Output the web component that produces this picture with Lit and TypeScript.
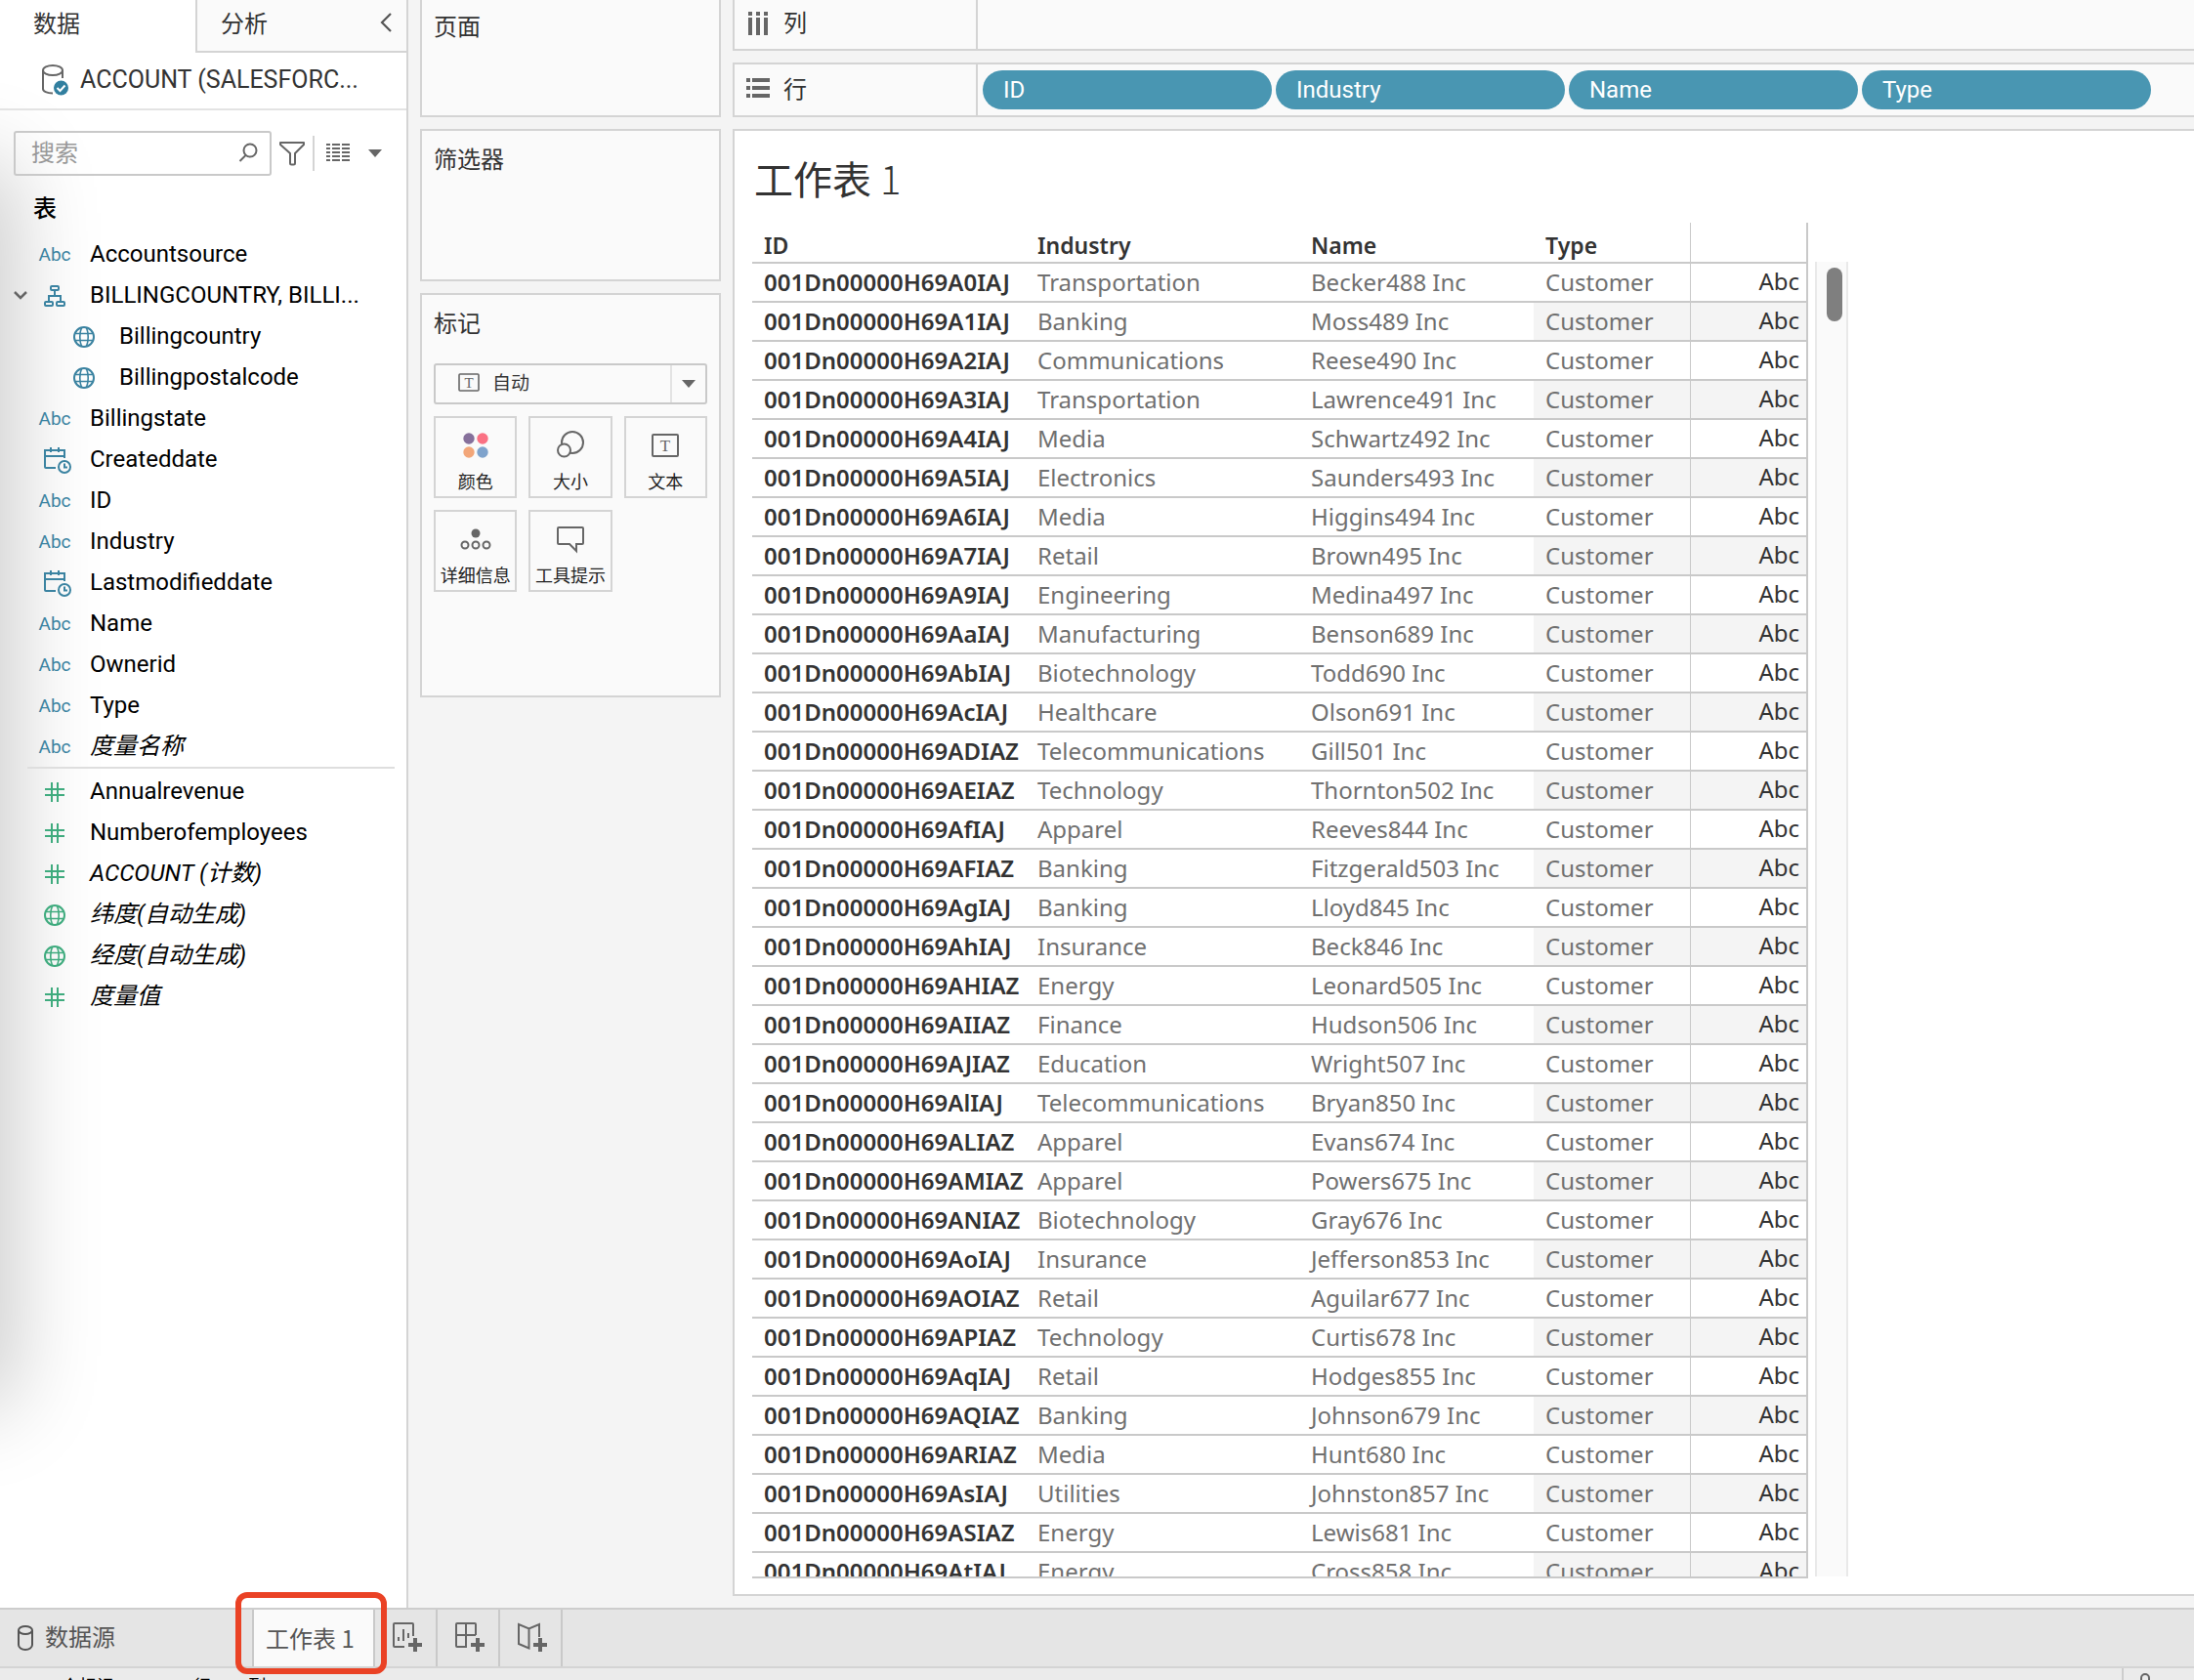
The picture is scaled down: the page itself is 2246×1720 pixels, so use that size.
import { LitElement, html, svg, css, nothing, TemplateResult } from "lit";
import { customElement } from "lit/decorators.js";
import { classMap } from "lit/directives/class-map.js";

type IconName = "abc" | "date" | "globe" | "hash" | "tree";

interface Field {
  label: string;
  icon: IconName;
  child?: boolean;
  generated?: boolean;
  expandable?: boolean;
}

const DIMENSIONS: Field[] = [
  { label: "Accountsource", icon: "abc" },
  { label: "BILLINGCOUNTRY, BILLI...", icon: "tree", expandable: true },
  { label: "Billingcountry", icon: "globe", child: true },
  { label: "Billingpostalcode", icon: "globe", child: true },
  { label: "Billingstate", icon: "abc" },
  { label: "Createddate", icon: "date" },
  { label: "ID", icon: "abc" },
  { label: "Industry", icon: "abc" },
  { label: "Lastmodifieddate", icon: "date" },
  { label: "Name", icon: "abc" },
  { label: "Ownerid", icon: "abc" },
  { label: "Type", icon: "abc" },
  { label: "度量名称", icon: "abc", generated: true },
];

const MEASURES: Field[] = [
  { label: "Annualrevenue", icon: "hash" },
  { label: "Numberofemployees", icon: "hash" },
  { label: "ACCOUNT (计数)", icon: "hash", generated: true },
  { label: "纬度(自动生成)", icon: "globe", generated: true },
  { label: "经度(自动生成)", icon: "globe", generated: true },
  { label: "度量值", icon: "hash", generated: true },
];

const ROWS: [string, string, string][] = [
  ["A0IAJ", "Transportation", "Becker488 Inc"],
  ["A1IAJ", "Banking", "Moss489 Inc"],
  ["A2IAJ", "Communications", "Reese490 Inc"],
  ["A3IAJ", "Transportation", "Lawrence491 Inc"],
  ["A4IAJ", "Media", "Schwartz492 Inc"],
  ["A5IAJ", "Electronics", "Saunders493 Inc"],
  ["A6IAJ", "Media", "Higgins494 Inc"],
  ["A7IAJ", "Retail", "Brown495 Inc"],
  ["A9IAJ", "Engineering", "Medina497 Inc"],
  ["AaIAJ", "Manufacturing", "Benson689 Inc"],
  ["AbIAJ", "Biotechnology", "Todd690 Inc"],
  ["AcIAJ", "Healthcare", "Olson691 Inc"],
  ["ADIAZ", "Telecommunications", "Gill501 Inc"],
  ["AEIAZ", "Technology", "Thornton502 Inc"],
  ["AfIAJ", "Apparel", "Reeves844 Inc"],
  ["AFIAZ", "Banking", "Fitzgerald503 Inc"],
  ["AgIAJ", "Banking", "Lloyd845 Inc"],
  ["AhIAJ", "Insurance", "Beck846 Inc"],
  ["AHIAZ", "Energy", "Leonard505 Inc"],
  ["AIIAZ", "Finance", "Hudson506 Inc"],
  ["AJIAZ", "Education", "Wright507 Inc"],
  ["AlIAJ", "Telecommunications", "Bryan850 Inc"],
  ["ALIAZ", "Apparel", "Evans674 Inc"],
  ["AMIAZ", "Apparel", "Powers675 Inc"],
  ["ANIAZ", "Biotechnology", "Gray676 Inc"],
  ["AoIAJ", "Insurance", "Jefferson853 Inc"],
  ["AOIAZ", "Retail", "Aguilar677 Inc"],
  ["APIAZ", "Technology", "Curtis678 Inc"],
  ["AqIAJ", "Retail", "Hodges855 Inc"],
  ["AQIAZ", "Banking", "Johnson679 Inc"],
  ["ARIAZ", "Media", "Hunt680 Inc"],
  ["AsIAJ", "Utilities", "Johnston857 Inc"],
  ["ASIAZ", "Energy", "Lewis681 Inc"],
  ["AtIAJ", "Energy", "Cross858 Inc"],
];

const icon = (w: number, h: number, body: TemplateResult | unknown) => html`<svg
  width=${w} height=${h} viewBox="0 0 ${w} ${h}" fill="none" stroke="currentColor" stroke-width="2" aria-hidden="true"
>${body}</svg>`;

const fieldIcon = (name: IconName) => {
  switch (name) {
    case "abc":
      return html`<span class="abc">Abc</span>`;
    case "globe":
      return icon(24, 24, svg`
        <circle cx="12" cy="12" r="10"/>
        <path d="M2.5 8.5h19M2.5 15.5h19M9.5 2.5c-2.300 5.500-2.300 13.500 0 19M14.500 2.500c2.300 5.500 2.300 13.500 0 19" stroke-width="1.600"/>`);
    case "hash":
      return icon(24, 24, svg`<path d="M9 2v20M15 2v20M2 9h20M2 15h20"/>`);
    case "date":
      return icon(30, 28, svg`
        <path d="M16 22H6a1 1 0 0 1-1-1V4h20v8M5 10h20M11 1v5M19 1v5"/>
        <circle cx="25" cy="21" r="6"/>
        <path d="M25 17.500v4h3"/>`);
    case "tree":
      return icon(24, 24, svg`
        <rect x="8" y="2" width="8" height="4" rx="1"/>
        <rect x="2" y="18" width="8" height="4" rx="1"/>
        <rect x="14" y="18" width="8" height="4" rx="1"/>
        <path d="M12 6v6M6 18v-6h12v6"/>`);
  }
};

const textMark = icon(32, 32, svg`
  <rect x="3" y="5" width="26" height="22" rx="1"/>
  <text x="16" y="22" text-anchor="middle" font-size="17" font-family="Liberation Serif, serif" fill="currentColor" stroke="none">T</text>`);

const plus = svg`<path d="M24 16v14M17 23h14" stroke-width="4"/>`;

@customElement("app-root")
export class AppRoot extends LitElement {
  static styles = css`
    :host {
      display: flex;
      flex-direction: column;
      height: 100vh;
      overflow: hidden;
      background: #f4f4f4;
      color: #333;
      font: 24px/32px Roboto, "Noto Sans CJK SC", sans-serif;
    }
    *, *::before, *::after { box-sizing: border-box; }
    button, select, input { font: inherit; color: inherit; margin: 0; }
    button { background: none; border: 0; padding: 0; cursor: pointer; }
    svg { display: block; flex: none; overflow: visible; }
    h1, h2, ul { margin: 0; padding: 0; font-weight: 400; }
    ul { list-style: none; }

    .workspace { flex: 1; min-height: 0; display: flex; gap: 12px; }

    /* data pane */
    .pane {
      width: 418px;
      flex: none;
      position: relative;
      z-index: 0;
      overflow: hidden;
      background: #fff;
      border-right: 2px solid #d4d4d4;
    }
    .shade {
      position: absolute;
      z-index: -1;
      left: -80px;
      top: 180px;
      bottom: 220px;
      width: 80px;
      box-shadow: 0 0 90px 12px rgba(0, 0, 0, 0.22);
    }
    .tabs { display: flex; height: 54px; }
    .tab { width: 200px; flex: none; padding: 0 0 4px 34px; text-align: left; }
    .tab-side {
      flex: 1;
      display: flex;
      justify-content: space-between;
      background: #fafafa;
      border: solid #d4d4d4;
      border-width: 0 0 2px 2px;
    }
    .tab-side .tab { width: auto; padding: 0 0 2px 24px; }
    .collapse { width: 40px; padding: 0 0 6px 12px; color: #555; }
    .source {
      display: flex;
      align-items: center;
      gap: 10px;
      height: 59px;
      padding: 0 0 2px 42px;
      border-bottom: 2px solid #e3e3e3;
      font-size: 25px;
    }
    .tools { display: flex; align-items: center; padding: 21px 0 0 14px; color: #666; }
    .search {
      display: flex;
      align-items: center;
      width: 264px;
      height: 46px;
      padding: 0 12px 0 16px;
      border: 2px solid #c9c9c9;
      border-radius: 3px;
    }
    .search input { flex: 1; min-width: 0; border: 0; outline: 0; padding: 0; background: none; }
    .search input::placeholder { color: #999; opacity: 1; }
    .tool { padding: 0 8px; }
    .tools .view { padding: 0 10px 0 11px; }
    .rule { width: 2px; height: 36px; background: #d4d4d4; }
    .heading { padding: 17px 34px 7px; color: #000; font-size: 24px; line-height: 35px; font-weight: 500; }
    .field { display: flex; align-items: center; height: 42px; padding-left: 10px; color: #000; }
    .field.child { padding-left: 60px; }
    .toggle { width: 20px; height: 24px; color: #666; }
    .spacer { width: 20px; }
    .glyph { width: 52px; height: 28px; padding-top: 1px; display: flex; align-items: center; justify-content: center; color: #3b83a1; }
    .glyph.measure { color: #3fab7e; }
    .abc { font-size: 19px; }
    .name { padding-left: 10px; }
    .generated .name { font-style: italic; }
    .split { height: 2px; margin: 0 12px 2px 28px; background: #dedede; }

    /* cards */
    .cards { width: 308px; flex: none; display: flex; flex-direction: column; gap: 12px; }
    .card { border: 2px solid #d4d4d4; background: #fafafa; padding: 12px; }
    .card h2 { font-size: 24px; line-height: 36px; }
    .pages { height: 120px; border-top: 0; padding-top: 10px; }
    .filters { height: 156px; }
    .marks { height: 414px; }
    .mark-type { position: relative; margin: 22px 0 12px; height: 42px; color: #666; }
    .mark-type select {
      width: 100%;
      height: 42px;
      padding: 0 0 0 58px;
      appearance: none;
      background: #fafafa;
      border: 2px solid #c9c9c9;
      border-radius: 3px;
      color: #333;
      font-size: 19px;
    }
    .mark-icon { position: absolute; left: 24px; top: 9px; pointer-events: none; }
    .mark-caret {
      position: absolute;
      right: 2px;
      top: 2px;
      bottom: 2px;
      width: 36px;
      border-left: 2px solid #e3e3e3;
      display: grid;
      place-items: center;
      pointer-events: none;
    }
    .mark-grid { display: grid; grid-template-columns: repeat(3, 1fr); gap: 12px; }
    .mark {
      height: 84px;
      display: flex;
      flex-direction: column;
      align-items: center;
      gap: 10px;
      padding-top: 12px;
      border: 2px solid #d4d4d4;
      color: #666;
      white-space: nowrap;
    }
    .mark span { font-size: 18px; line-height: 24px; color: #222; }

    /* shelves and sheet */
    .main { flex: 1; min-width: 0; display: flex; flex-direction: column; gap: 12px; padding-bottom: 12px; }
    .shelf { display: flex; background: #fafafa; border: 2px solid #d4d4d4; border-right: 0; height: 56px; }
    .shelf.columns { height: 52px; border-top: 0; }
    .shelf-label {
      width: 249px;
      display: flex;
      align-items: center;
      gap: 12px;
      padding-left: 12px;
      border-right: 2px solid #d4d4d4;
    }
    .columns .shelf-label { padding-bottom: 2px; }
    .shelf-label svg { color: #666; }
    .pills { flex: 1; display: flex; align-items: center; gap: 4px; padding-left: 5px; }
    .pill {
      width: 296px;
      height: 40px;
      padding-left: 21px;
      border-radius: 20px;
      background: #4996b2;
      color: #fff;
      text-align: left;
    }
    .sheet {
      flex: 1;
      min-height: 0;
      display: flex;
      flex-direction: column;
      padding: 22px 0 16px 18px;
      background: #fff;
      border: 2px solid #d4d4d4;
      border-right: 0;
    }
    .sheet h1 {
      margin: 0 0 20px 2px;
      font: 400 40px/52px "Noto Sans CJK SC", sans-serif;
    }
    .light { font-weight: 300; }
    .view-area { flex: 1; min-height: 0; display: flex; }
    .table-clip { overflow: hidden; border-bottom: 2px solid #c9c9c9; }
    table {
      width: 1081px;
      table-layout: fixed;
      border-collapse: separate;
      border-spacing: 0;
      font-family: "Noto Sans", "Noto Sans CJK SC", sans-serif;
      line-height: 36px;
    }
    .c-wide { width: 280px; }
    .c-name { width: 240px; }
    .c-type { width: 160px; }
    th, td {
      height: 40px;
      padding: 0 0 0 12px;
      border-bottom: 2px solid #c9c9c9;
      text-align: left;
      white-space: nowrap;
      font-size: 24px;
      font-weight: 400;
      color: #707070;
    }
    th { font-weight: 600; color: #333; }
    thead th { height: 42px; padding-top: 6px; font-size: 23px; line-height: 32px; }
    td.value, th.value {
      padding: 0 7px 2px 0;
      border-left: 1px solid #c9c9c9;
      border-right: 2px solid #c9c9c9;
      text-align: right;
      color: #333;
    }
    tbody tr:nth-child(even) .banded { background: #f4f4f4; }
    .scroll {
      width: 34px;
      margin: 40px 0 2px 7px;
      padding: 6px 0 0 10px;
      background: #fafafa;
      border: solid #e9e9e9;
      border-width: 0 2px;
    }
    .thumb { width: 16px; height: 55px; border-radius: 8px; background: #7f7f7f; }

    /* sheet tabs */
    .sheets {
      display: flex;
      height: 62px;
      border-top: 2px solid #cdcdcd;
      border-bottom: 2px solid #d4d4d4;
      background: #e5e5e5;
      color: #555;
      flex: none;
    }
    .datasource { display: flex; align-items: center; gap: 12px; width: 258px; padding-left: 18px; }
    .sheet-tab {
      position: relative;
      width: 126px;
      padding-left: 12px;
      background: #fafafa;
      border: solid #c9c9c9;
      border-width: 0 2px;
      font-family: "Noto Sans CJK SC", sans-serif;
      text-align: left;
      white-space: nowrap;
    }
    .callout {
      position: absolute;
      inset: -18px -14px -8px -19px;
      border: 6px solid #ea4225;
      border-radius: 12px;
      pointer-events: none;
    }
    .new { width: 64px; padding-left: 17px; border-right: 2px solid #c9c9c9; color: #666; }
    .status {
      display: flex;
      justify-content: space-between;
      height: 12px;
      flex: none;
      overflow: hidden;
      background: #ebebeb;
      color: #000;
      font-size: 18px;
    }
    .counts { display: flex; gap: 24px; padding: 3px 0 0 28px; white-space: nowrap; }
    .marks-count { padding-right: 22px; }
    .lock { width: 74px; border-left: 2px solid #cdcdcd; padding: 5px 0 0 14px; color: #666; }
  `;

  private renderField(f: Field, measure: boolean) {
    return html`<li class=${classMap({ field: true, child: !!f.child, generated: !!f.generated })}>
      ${f.child
        ? nothing
        : f.expandable
          ? html`<button class="toggle" aria-label="展开" aria-expanded="true">
              ${icon(20, 24, svg`<path d="M5 9l6 6 6-6" stroke-width="2.500"/>`)}
            </button>`
          : html`<span class="spacer"></span>`}
      <span class=${classMap({ glyph: true, measure })}>${fieldIcon(f.icon)}</span>
      <span class="name">${f.label}</span>
    </li>`;
  }

  private renderPane() {
    return html`<aside class="pane">
      <div class="shade"></div>
      <div class="tabs">
        <button class="tab">数据</button>
        <div class="tab-side">
          <button class="tab">分析</button>
          <button class="collapse" aria-label="折叠">
            ${icon(16, 24, svg`<path d="M12 3L3 12l9 9" stroke-width="2.200"/>`)}
          </button>
        </div>
      </div>
      <div class="source">
        ${icon(30, 34, svg`
          <g stroke="#666">
            <ellipse cx="12" cy="7" rx="10" ry="5"/>
            <path d="M2 7v19c0 2.500 4 4.500 10 4.500M22 7v8"/>
          </g>
          <circle cx="20.500" cy="25" r="7.500" fill="#317f9f" stroke="none"/>
          <path d="M16.500 25l3 3 5-5.500" stroke="#fff"/>`)}
        <span>ACCOUNT (SALESFORC...</span>
      </div>
      <div class="tools">
        <label class="search">
          <input type="text" placeholder="搜索" aria-label="搜索" />
          ${icon(20, 24, svg`<circle cx="12" cy="9" r="6.500"/><path d="M7.500 14L1.500 20"/>`)}
        </label>
        <button class="tool" aria-label="筛选">
          ${icon(26, 26, svg`<path d="M1 2h24v2l-9 9v10a1.500 1.500 0 0 1-1.500 1.500h-2A1.500 1.500 0 0 1 11 23V13L1 4z" stroke-linejoin="round"/>`)}
        </button>
        <span class="rule"></span>
        <button class="tool view" aria-label="视图">
          ${icon(26, 24, svg`<path d="M1 3h4M7 3h8M17 3h8M1 7h4M7 7h8M17 7h8M1 11h4M7 11h8M17 11h8M1 15h4M7 15h8M17 15h8M1 19h4M7 19h8M17 19h8"/>`)}
        </button>
        <button class="tool" aria-label="更多">
          ${icon(14, 8, svg`<path d="M0 0h14L7 8z" fill="currentColor" stroke="none"/>`)}
        </button>
      </div>
      <h2 class="heading">表</h2>
      <ul>${DIMENSIONS.map((f) => this.renderField(f, false))}</ul>
      <div class="split"></div>
      <ul>${MEASURES.map((f) => this.renderField(f, true))}</ul>
    </aside>`;
  }

  private renderCards() {
    const marks: [string, unknown][] = [
      ["颜色", icon(32, 32, svg`<g stroke="none">
        <circle cx="9" cy="9" r="5.700" fill="#86709b"/><circle cx="23" cy="9" r="5.700" fill="#fa7183"/>
        <circle cx="9" cy="23" r="5.700" fill="#f2a679"/><circle cx="23" cy="23" r="5.700" fill="#7fa3cc"/></g>`)],
      ["大小", icon(32, 32, svg`<circle cx="18" cy="13" r="11"/><circle cx="9.500" cy="21" r="6.500" fill="#fafafa"/>`)],
      ["文本", textMark],
      ["详细信息", icon(32, 32, svg`<circle cx="16" cy="10" r="4.500" fill="currentColor" stroke="none"/>
        <circle cx="5" cy="22" r="3.500"/><circle cx="16" cy="22" r="3.500"/><circle cx="27" cy="22" r="3.500"/>`)],
      ["工具提示", icon(32, 32, svg`<path d="M4 4h24a1 1 0 0 1 1 1v15a1 1 0 0 1-1 1h-6v7l-7-7H4a1 1 0 0 1-1-1V5a1 1 0 0 1 1-1z"/>`)],
    ];
    return html`<div class="cards">
      <section class="card pages"><h2>页面</h2></section>
      <section class="card filters"><h2>筛选器</h2></section>
      <section class="card marks">
        <h2>标记</h2>
        <div class="mark-type">
          <select aria-label="标记类型"><option>自动</option></select>
          <span class="mark-icon">
            ${icon(24, 22, svg`<rect x="2" y="2" width="20" height="17" rx="1" stroke-width="1.600"/>
              <text x="12" y="16" text-anchor="middle" font-size="15" font-family="Liberation Serif, serif" fill="currentColor" stroke="none">T</text>`)}
          </span>
          <span class="mark-caret">${icon(14, 8, svg`<path d="M0 0h14L7 8z" fill="currentColor" stroke="none"/>`)}</span>
        </div>
        <div class="mark-grid">
          ${marks.map(([label, glyph]) => html`<button class="mark">${glyph}<span>${label}</span></button>`)}
        </div>
      </section>
    </div>`;
  }

  private renderMain() {
    return html`<main class="main">
      <div class="shelf columns">
        <div class="shelf-label">
          ${icon(26, 24, svg`<path d="M4 0v4M4 6v18M12 0v4M12 6v18M20 0v4M20 6v18" stroke-width="4"/>`)}
          <span>列</span>
        </div>
      </div>
      <div class="shelf">
        <div class="shelf-label">
          ${icon(26, 24, svg`<path d="M0 2h4M6 2h18M0 10h4M6 10h18M0 18h4M6 18h18" stroke-width="4"/>`)}
          <span>行</span>
        </div>
        <div class="pills">
          ${["ID", "Industry", "Name", "Type"].map((p) => html`<button class="pill">${p}</button>`)}
        </div>
      </div>
      <section class="sheet">
        <h1>工作表 <span class="light">1</span></h1>
        <div class="view-area">
          <div class="table-clip">
            <table>
              <colgroup>
                <col class="c-wide" /><col class="c-wide" /><col class="c-name" /><col class="c-type" /><col />
              </colgroup>
              <thead>
                <tr><th>ID</th><th>Industry</th><th>Name</th><th>Type</th><th class="value"></th></tr>
              </thead>
              <tbody>
                ${ROWS.map(([id, industry, name]) => html`<tr>
                  <th scope="row">001Dn00000H69${id}</th>
                  <td>${industry}</td>
                  <td>${name}</td>
                  <td class="banded">Customer</td>
                  <td class="value banded">Abc</td>
                </tr>`)}
              </tbody>
            </table>
          </div>
          <div class="scroll"><div class="thumb"></div></div>
        </div>
      </section>
    </main>`;
  }

  private renderFooter() {
    return html`<nav class="sheets">
        <button class="datasource">
          ${icon(16, 28, svg`<ellipse cx="8" cy="6" rx="7" ry="4"/><path d="M1 6v15c0 2.500 3 5 7 5s7-2.500 7-5V6"/>`)}
          <span>数据源</span>
        </button>
        <button class="sheet-tab">工作表 1<span class="callout"></span></button>
        <button class="new" aria-label="新建工作表">
          ${icon(32, 32, svg`<path d="M13 25H3a1 1 0 0 1-1-1V2a1 1 0 0 1 1-1h18a1 1 0 0 1 1 1v12M7 15v4M12 7v12M17 11v5"/>${plus}`)}
        </button>
        <button class="new" aria-label="新建仪表板">
          ${icon(32, 32, svg`<path d="M9 25H3a1 1 0 0 1-1-1V2a1 1 0 0 1 1-1h18a1 1 0 0 1 1 1v11M2 13h20M12 1v24H9"/>${plus}`)}
        </button>
        <button class="new" aria-label="新建故事">
          ${icon(32, 32, svg`<path d="M23 15V2l-10.500 4.500L2 2v20l10.500 4.500V6"/>${plus}`)}
        </button>
      </nav>
      <footer class="status">
        <div class="counts"><span class="marks-count">200 个标记</span><span>200 行</span><span>1 列</span></div>
        <div class="lock">${icon(16, 24, svg`<path d="M4 12V5a4 4 0 0 1 8 0v7"/>`)}</div>
      </footer>`;
  }

  render() {
    return html`
      <div class="workspace">${this.renderPane()}${this.renderCards()}${this.renderMain()}</div>
      ${this.renderFooter()}
    `;
  }
}
